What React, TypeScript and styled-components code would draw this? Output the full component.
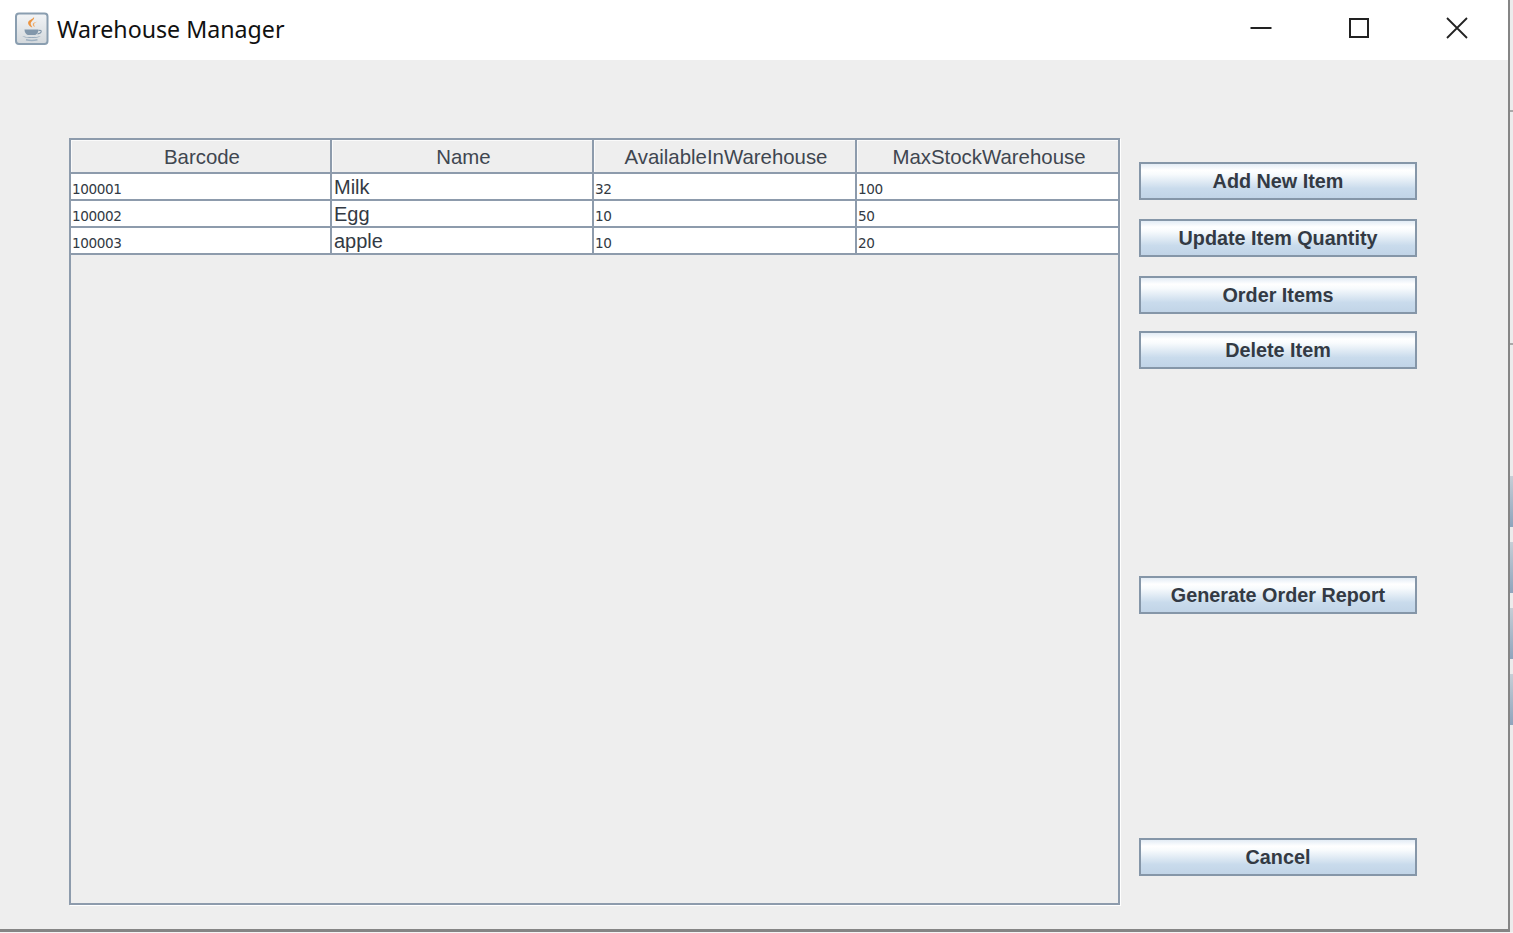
import React from "react";
import styled, { createGlobalStyle } from "styled-components";

const GlobalStyle = createGlobalStyle`
  html, body {
    margin: 0;
    padding: 0;
    background: #f4f4f4;
    overflow: hidden;
  }
  * {
    box-sizing: border-box;
  }
`;

const columns = ["Barcode", "Name", "AvailableInWarehouse", "MaxStockWarehouse"];

const rows = [
  { barcode: "100001", name: "Milk", available: "32", max: "100" },
  { barcode: "100002", name: "Egg", available: "10", max: "50" },
  { barcode: "100003", name: "apple", available: "10", max: "20" },
];

const actions = [
  { label: "Add New Item", gap: 0 },
  { label: "Update Item Quantity", gap: 19 },
  { label: "Order Items", gap: 19 },
  { label: "Delete Item", gap: 17 },
  { label: "Generate Order Report", gap: 207 },
  { label: "Cancel", gap: 224 },
];

const stripMarks = [
  { top: 110, height: 2, blue: false },
  { top: 231, height: 2, blue: false },
  { top: 131, height: 51, blue: true },
  { top: 15, height: 51, blue: true },
  { top: 15, height: 51, blue: true },
  { top: 15, height: 51, blue: true },
];

const JavaIcon = () => (
  <svg width="36" height="34" viewBox="0 0 36 34">
    <defs>
      <linearGradient id="tile" x1="0" y1="0" x2="0" y2="1">
        <stop offset="0" stopColor="#f2f4f6" />
        <stop offset="1" stopColor="#d3d8dc" />
      </linearGradient>
    </defs>
    <rect x="2" y="1.500" width="31.500" height="30.500" rx="3" fill="url(#tile)" stroke="#8a9eb0" strokeWidth="2" />
    <path d="M20 5c1 2.800-4 4.300-3.200 7.500.3 1.200 1.300 2 1.500 3-1.300-.5-4.300-2.200-4.200-4.800.1-2.800 5-3.300 5.900-5.700z" fill="#ec9440" />
    <path d="M23.500 9.500c-2 .9-3.800 1.700-3.400 3.400.2.800.7 1.300.7 2-1.200-.5-2.100-1.300-2-2.700.1-1.700 2.900-2 4.700-2.700z" fill="#f0ab66" />
    <path d="M10.500 17.500h14c0 2.800-1.500 4.800-3.300 5.500h-7.400c-1.800-.7-3.300-2.700-3.300-5.500z" fill="#8297ab" />
    <path d="M24.500 18.500c2-.5 3 .3 2.600 1.500-.4 1.100-2 1.700-3.600 1.800" fill="none" stroke="#8297ab" strokeWidth="1.200" />
    <path d="M8.500 24c3.500 1.600 14.500 1.600 18 0-1.500 2.600-16.500 2.600-18 0z" fill="#8ea3b6" />
    <path d="M12 27.800c3 .8 8.500 .8 11.500 0" fill="none" stroke="#9fb1c1" strokeWidth="1.400" />
  </svg>
);

const MinimizeIcon = () => (
  <svg width="22" height="22" viewBox="0 0 22 22">
    <path d="M0.500 11H21.500" stroke="#222" strokeWidth="2" fill="none" />
  </svg>
);

const MaximizeIcon = () => (
  <svg width="22" height="22" viewBox="0 0 22 22">
    <rect x="2" y="2" width="18" height="18" stroke="#222" strokeWidth="2" fill="none" />
  </svg>
);

const CloseIcon = () => (
  <svg width="22" height="22" viewBox="0 0 22 22">
    <path d="M1 1L21 21M21 1L1 21" stroke="#222" strokeWidth="1.800" fill="none" />
  </svg>
);

const App = () => {
  return (
    <Screen>
      <GlobalStyle />
      <TopArea>
        <Window>
          <TitleBar>
            <TitleGroup>
              <JavaIcon />
              <Title>Warehouse Manager</Title>
            </TitleGroup>
            <WindowControls>
              <ControlButton aria-label="Minimize">
                <MinimizeIcon />
              </ControlButton>
              <ControlButton aria-label="Maximize">
                <MaximizeIcon />
              </ControlButton>
              <ControlButton aria-label="Close">
                <CloseIcon />
              </ControlButton>
            </WindowControls>
          </TitleBar>
          <Content>
            <TablePanel>
              <HeaderRow>
                {columns.map((col) => (
                  <HeaderCell key={col}>{col}</HeaderCell>
                ))}
              </HeaderRow>
              {rows.map((row) => (
                <DataRow key={row.barcode}>
                  <NumberCell>{row.barcode}</NumberCell>
                  <TextCell>{row.name}</TextCell>
                  <NumberCell>{row.available}</NumberCell>
                  <NumberCell>{row.max}</NumberCell>
                </DataRow>
              ))}
            </TablePanel>
            <ActionColumn>
              {actions.map((action) => (
                <ActionButton key={action.label} $gap={action.gap}>
                  {action.label}
                </ActionButton>
              ))}
            </ActionColumn>
          </Content>
        </Window>
        <BehindStrip>
          {stripMarks.map((mark, i) => (
            <StripMark key={i} $top={mark.top} $height={mark.height} $blue={mark.blue} />
          ))}
        </BehindStrip>
      </TopArea>
    </Screen>
  );
};

export default App;

const Screen = styled.div`
  width: 1513px;
  height: 933px;
  background: #f4f4f4;
  overflow: hidden;
`;

const TopArea = styled.div`
  display: flex;
  height: 932px;
`;

const Window = styled.div`
  width: 1510px;
  height: 932px;
  display: flex;
  flex-direction: column;
  background: #eeeeee;
  border-right: 2px solid #858585;
  border-bottom: 3px solid #858585;
`;

const TitleBar = styled.div`
  height: 60px;
  flex: none;
  display: flex;
  align-items: center;
  justify-content: space-between;
  background: #ffffff;
  padding-left: 14px;
`;

const TitleGroup = styled.div`
  display: flex;
  align-items: center;
  gap: 7px;
  margin-top: -3px;
`;

const Title = styled.span`
  font-family: "Noto Sans", "Open Sans", sans-serif;
  font-size: 23.200px;
  color: #111111;
`;

const WindowControls = styled.div`
  display: flex;
  margin-right: 2px;
  margin-top: -4px;
`;

const ControlButton = styled.div`
  width: 98px;
  height: 40px;
  display: flex;
  align-items: center;
  justify-content: center;
`;

const Content = styled.div`
  flex: 1;
  display: flex;
  align-items: flex-start;
  gap: 19px;
  padding: 78px 0 0 69px;
`;

const TablePanel = styled.div`
  width: 1051px;
  height: 767px;
  flex: none;
  border: 2px solid #8d9bac;
  box-shadow: 1px 1px 0 #ffffff;
`;

const HeaderRow = styled.div`
  display: grid;
  grid-template-columns: 261px 262px 263px 261px;
  height: 34px;
  border-bottom: 2px solid #8d9bac;
`;

const HeaderCell = styled.div`
  display: flex;
  align-items: center;
  justify-content: center;
  padding: 2px 0 0 3px;
  font-family: "Liberation Sans", Arial, sans-serif;
  font-size: 20.400px;
  color: #3f4650;
  border-right: 2px solid #8d9bac;
  box-shadow: inset 1px 1px 0 #fafafa;
  &:last-child {
    border-right: none;
  }
`;

const DataRow = styled.div`
  display: grid;
  grid-template-columns: 261px 262px 263px 261px;
  height: 27px;
  background: #ffffff;
  border-bottom: 2px solid #8d9bac;
`;

const BaseCell = styled.div`
  display: flex;
  align-items: center;
  padding-left: 1px;
  color: #333a44;
  border-right: 2px solid #8d9bac;
  &:last-child {
    border-right: none;
  }
`;

const NumberCell = styled(BaseCell)`
  font-family: "DejaVu Sans", sans-serif;
  font-size: 13.600px;
  letter-spacing: -0.400px;
  padding-top: 4px;
`;

const TextCell = styled(BaseCell)`
  font-family: "Liberation Sans", Arial, sans-serif;
  font-size: 20px;
  padding-left: 2px;
  padding-top: 1px;
`;

const ActionColumn = styled.div`
  width: 278px;
  flex: none;
  display: flex;
  flex-direction: column;
  padding-top: 24px;
`;

const ActionButton = styled.button<{ $gap: number }>`
  height: 38px;
  flex: none;
  margin-top: ${(p) => p.$gap}px;
  padding: 0;
  border: 2px solid #8596a8;
  background: linear-gradient(#e3ecf5 0%, #ffffff 18%, #f8fbfd 30%, #c9dbec 72%, #c1d4e7 100%);
  font-family: "Liberation Sans", Arial, sans-serif;
  font-size: 19.800px;
  font-weight: 700;
  color: #333a44;
`;

const BehindStrip = styled.div`
  width: 3px;
  flex: none;
  display: flex;
  flex-direction: column;
  background: #ececec;
`;

const StripMark = styled.div<{ $top: number; $height: number; $blue: boolean }>`
  flex: none;
  margin-top: ${(p) => p.$top}px;
  height: ${(p) => p.$height}px;
  background: ${(p) => (p.$blue ? "linear-gradient(#c6ced6, #8ea4bc)" : "#a9a9a9")};
`;
